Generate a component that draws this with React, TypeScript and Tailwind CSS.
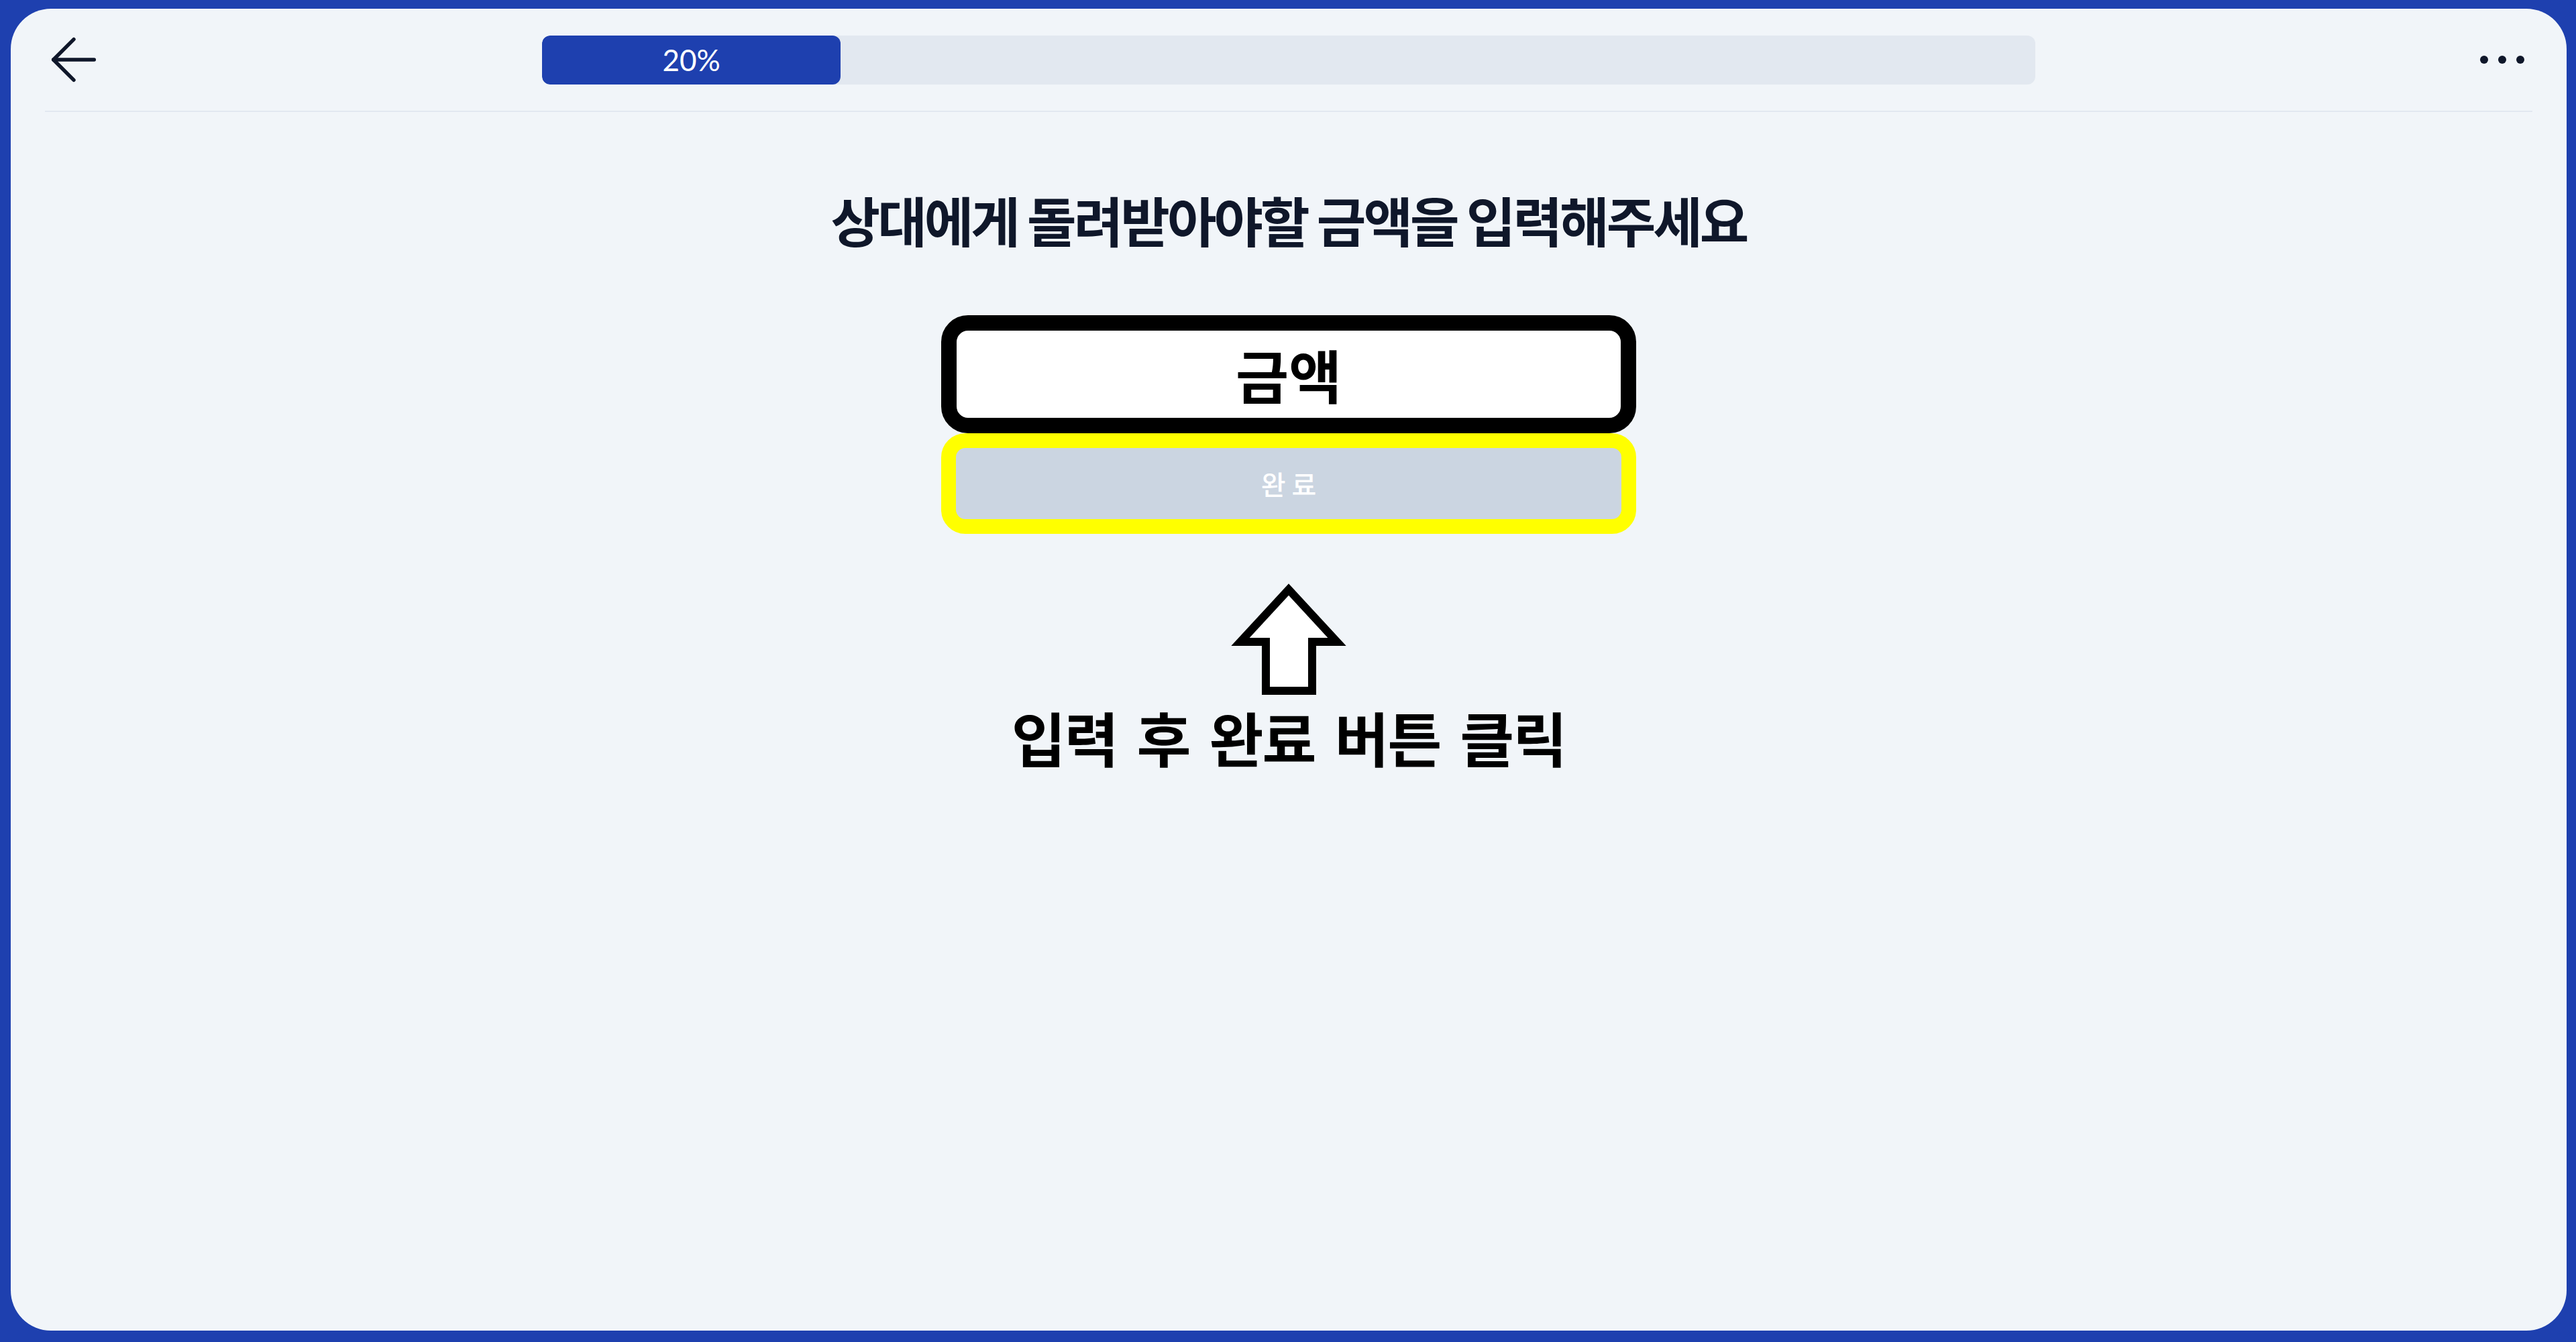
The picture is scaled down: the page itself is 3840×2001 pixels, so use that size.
import { ArrowLeft } from 'lucide-react';

const KR = "font-['Noto_Sans_CJK_KR','Noto_Sans',sans-serif]";

function ProgressBar({ value }: { value: number }) {
    return (
        <div className="h-[73px] w-[2226px] overflow-hidden rounded-[12px] bg-[#e2e8f0]">
            <div
                className="flex h-full items-center justify-center rounded-[12px] bg-[#1e40af]"
                style={{ width: `${value}%` }}
            >
                <span className="font-['Lato',sans-serif] text-[44px] leading-none text-white">{value}%</span>
            </div>
        </div>
    );
}

function UpArrow() {
    return (
        <svg width="160" height="171" viewBox="0 0 160 171" className="overflow-visible">
            <polygon
                points="80,14 152,92 115,92 115,165 46,165 46,92 8,92"
                fill="#ffffff"
                stroke="#000000"
                strokeWidth="12"
                strokeLinejoin="miter"
            />
        </svg>
    );
}

export default function App() {
    return (
        <div className="h-screen w-full bg-[#1e40af] pt-[13px] pl-[16px] pr-[14px] pb-[17px]">
            <div className={`flex h-full flex-col rounded-[60px] bg-[#f1f5f9] ${KR}`}>
                {/* Header */}
                <div className="mx-[51px] grid h-[154px] shrink-0 grid-cols-[1fr_auto_1fr] items-center border-b-2 border-[#e2e8f0]">
                    <button className="-ml-[9px] justify-self-start text-[#0f172a]">
                        <ArrowLeft size={104} strokeWidth={1.25} />
                    </button>
                    <ProgressBar value={20} />
                    <button className="flex items-center gap-[15px] justify-self-end pr-[12px]">
                        <span className="h-[12px] w-[12px] rounded-full bg-[#0f172a]" />
                        <span className="h-[12px] w-[12px] rounded-full bg-[#0f172a]" />
                        <span className="h-[12px] w-[12px] rounded-full bg-[#0f172a]" />
                    </button>
                </div>

                {/* Body */}
                <div className="flex flex-col items-center">
                    <h1 className="mt-[119px] text-[80px] font-bold leading-none tracking-[-4px] text-[#0f172a]">
                        상대에게 돌려받아야할 금액을 입력해주세요
                    </h1>

                    <div className="mt-[104px] flex w-[1036px] flex-col">
                        <div className="flex h-[176px] items-center justify-center rounded-[40px] border-[23px] border-black bg-white">
                            <span className="text-[86px] font-bold leading-none text-black">금액</span>
                        </div>
                        <button className="flex h-[150px] items-center justify-center rounded-[36px] border-[22px] border-[#ffff00] bg-[#cbd5e1]">
                            <span className="text-[40px] font-medium leading-none text-white">완 료</span>
                        </button>
                    </div>

                    <div className="mt-[69px]">
                        <UpArrow />
                    </div>

                    <p className="mt-[18px] text-[88px] font-bold leading-none tracking-[-2px] text-black [word-spacing:11px]">
                        입력 후 완료 버튼 클릭
                    </p>
                </div>
            </div>
        </div>
    );
}
